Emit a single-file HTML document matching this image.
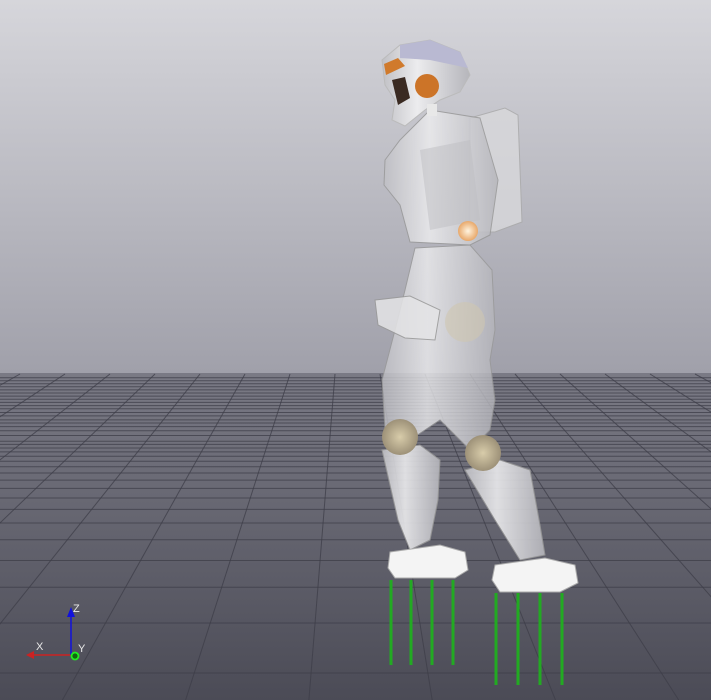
<!DOCTYPE html>
<html><head><style>html,body{margin:0;padding:0;width:711px;height:700px;overflow:hidden}svg{overflow:hidden}</style></head>
<body>
<svg id="s" width="711" height="700" viewBox="0 0 711 700" xmlns="http://www.w3.org/2000/svg" style="display:block">
<defs>
<linearGradient id="sky" x1="0" y1="0" x2="0" y2="1"><stop offset="0" stop-color="#d6d6db"/><stop offset="1" stop-color="#a0a0aa"/></linearGradient>
<linearGradient id="fl" x1="0" y1="0" x2="0" y2="1"><stop offset="0" stop-color="#7a7a85"/><stop offset="1" stop-color="#4b4b56"/></linearGradient>
<linearGradient id="met" x1="0" y1="0" x2="1" y2="0"><stop offset="0" stop-color="#c0c0c5"/><stop offset="0.4" stop-color="#ececee"/><stop offset="1" stop-color="#b5b5bb"/></linearGradient>
<radialGradient id="knee"><stop offset="0" stop-color="#d8ccaa"/><stop offset="1" stop-color="#9d9178"/></radialGradient>
<radialGradient id="glow"><stop offset="0" stop-color="#fff4e0"/><stop offset="1" stop-color="#e8a86a"/></radialGradient>
</defs>
<rect width="711" height="374" fill="url(#sky)"/>
<rect y="373" width="711" height="327" fill="url(#fl)"/>
<g id="grid" stroke="#3e3e48" stroke-width="1" stroke-opacity="0.75" fill="none"></g>
<g>
<path d="M470 118 L505 108 L518 115 L522 222 L495 232 L470 232 Z" fill="#d9d9dc" stroke="#aaa" opacity="0.8"/>
<path d="M400 140 L430 110 L480 118 L498 180 L490 235 L470 245 L410 242 L400 205 L384 185 L385 160 Z" fill="url(#met)" opacity="0.85" stroke="#999"/>
<path d="M420 150 L470 140 L480 220 L430 230 Z" fill="#bdbdc2" opacity="0.5"/>
<path d="M415 248 L470 245 L492 270 L495 330 L490 360 L495 400 L490 430 L470 450 L440 420 L410 440 L385 430 L382 380 L395 330 L405 290 Z" fill="url(#met)" opacity="0.8" stroke="#999"/>
<path d="M375 300 L410 296 L440 310 L435 340 L405 338 L378 325 Z" fill="#e4e4e6" opacity="0.85" stroke="#999"/>
<path d="M382 450 L420 445 L440 460 L438 500 L430 540 L410 550 L398 520 Z" fill="url(#met)" opacity="0.9" stroke="#999"/>
<path d="M465 470 L500 460 L530 470 L540 525 L545 555 L520 560 L495 520 Z" fill="url(#met)" opacity="0.9" stroke="#999"/>
<circle cx="400" cy="437" r="18" fill="url(#knee)"/>
<circle cx="483" cy="453" r="18" fill="url(#knee)"/>
<circle cx="465" cy="322" r="20" fill="#cfc6b0" opacity="0.6"/>
<circle cx="468" cy="231" r="10" fill="url(#glow)"/>
<path d="M390 552 L440 545 L465 552 L468 570 L455 578 L395 578 L388 568 Z" fill="#f4f4f4" stroke="#aaa"/>
<path d="M495 565 L545 558 L575 565 L578 583 L560 592 L500 592 L492 580 Z" fill="#f4f4f4" stroke="#aaa"/>
<path d="M382 60 L400 45 L430 40 L460 52 L470 75 L460 92 L440 100 L425 110 L405 126 L392 120 L395 100 L385 85 Z" fill="url(#met)" stroke="#bbb"/>
<path d="M400 45 L430 40 L460 52 L468 68 L430 60 L400 58 Z" fill="#b9b9d2"/>
<path d="M384 64 L398 58 L405 66 L386 75 Z" fill="#d07a2c"/>
<circle cx="427" cy="86" r="12" fill="#cc7428"/>
<path d="M392 80 L405 77 L410 98 L398 105 Z" fill="#3a2a22"/>
<rect x="427" y="104" width="10" height="12" fill="#e8e8e8"/>
</g>
<g stroke="#22aa22" stroke-width="3">
<line x1="391" y1="580" x2="391" y2="665"/><line x1="411" y1="580" x2="411" y2="665"/><line x1="432" y1="580" x2="432" y2="665"/><line x1="453" y1="580" x2="453" y2="665"/>
<line x1="496" y1="593" x2="496" y2="685"/><line x1="518" y1="593" x2="518" y2="685"/><line x1="540" y1="593" x2="540" y2="685"/><line x1="562" y1="593" x2="562" y2="685"/>
</g>
<line x1="71" y1="655" x2="32" y2="655" stroke="#cc2222" stroke-width="1.5"/>
<polygon points="26,655 34,651 34,659" fill="#cc2222"/>
<line x1="71" y1="655" x2="71" y2="614" stroke="#1111dd" stroke-width="1.5"/>
<polygon points="71,607 67,617 75,617" fill="#1111dd"/>
<circle cx="75" cy="656" r="3.5" fill="#116611" stroke="#22ee22" stroke-width="1.8"/>
<g fill="#e8e8e8" font-family="Liberation Sans, sans-serif" font-size="11">
<text x="36" y="650">X</text><text x="73" y="612">Z</text><text x="78" y="652">Y</text></g>
</svg>
<script>
var g=document.getElementById('grid'),h='',last=1e9;
for(var n=-1;n<600;n++){var y=373+1500/(n+5);if(y<375)break;if(y>700)continue;if(last-y<3)continue;last=y;h+='<line x1="0" y1="'+y.toFixed(1)+'" x2="711" y2="'+y.toFixed(1)+'"/>';}
var vx=350,vy=185;
for(var k=-30;k<30;k++){var x0=290+45*k;var x1=vx+(x0-vx)*(700-vy)/(373-vy);h+='<line x1="'+x0+'" y1="374" x2="'+x1.toFixed(1)+'" y2="700"/>';}
g.innerHTML=h;
</script>
</body></html>
